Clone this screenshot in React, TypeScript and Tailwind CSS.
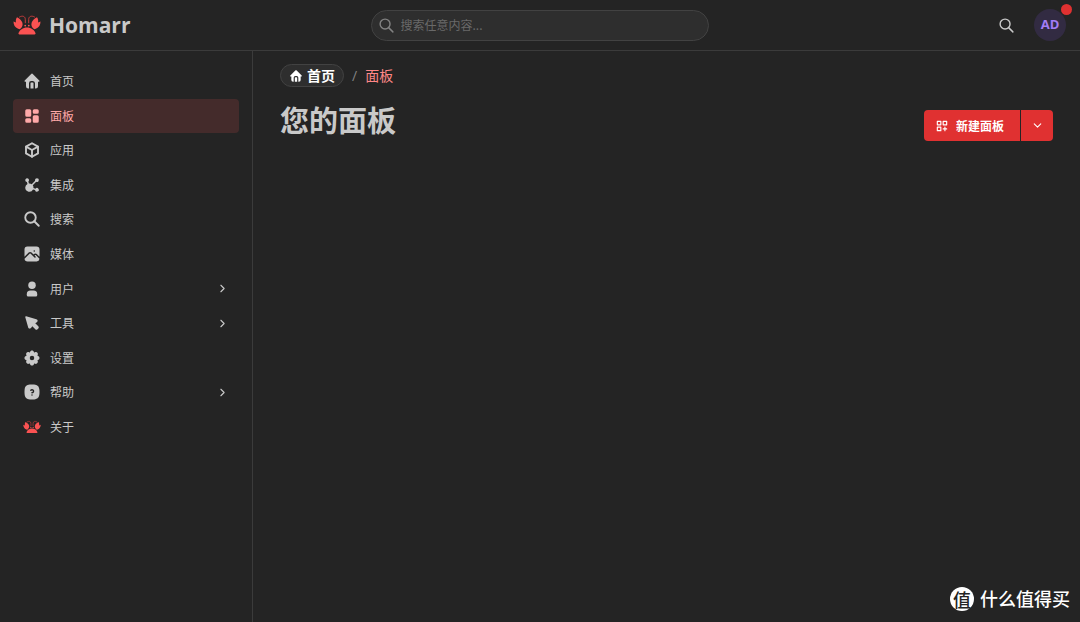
import { useState } from 'react';
import type { IconType } from 'react-icons';
import {
  TbAffiliateFilled,
  TbBox,
  TbCategoryPlus,
  TbChevronDown,
  TbChevronRight,
  TbHelpSquareRoundedFilled,
  TbHomeFilled,
  TbLayoutDashboardFilled,
  TbPhotoFilled,
  TbPointerFilled,
  TbSearch,
  TbSettingsFilled,
  TbUserFilled,
} from 'react-icons/tb';

interface NavItem {
  label: string;
  icon?: IconType;
  outlined?: boolean;
  expandable?: boolean;
}

const NAV_ITEMS: NavItem[] = [
  { label: '首页', icon: TbHomeFilled },
  { label: '面板', icon: TbLayoutDashboardFilled },
  { label: '应用', icon: TbBox, outlined: true },
  { label: '集成', icon: TbAffiliateFilled },
  { label: '搜索', icon: TbSearch, outlined: true },
  { label: '媒体', icon: TbPhotoFilled },
  { label: '用户', icon: TbUserFilled, expandable: true },
  { label: '工具', icon: TbPointerFilled, expandable: true },
  { label: '设置', icon: TbSettingsFilled },
  { label: '帮助', icon: TbHelpSquareRoundedFilled, expandable: true },
  { label: '关于' },
];

function Logo({ className }: { className?: string }) {
  return (
    <svg viewBox="0 0 28 20" className={className} fill="#fa5252" aria-hidden="true">
      {/* 身体 */}
      <path d="M5.500 18.200C6.500 15.200 9.800 12.500 14 12.500s7.500 2.700 8.500 5.700c.2.700-.2 1.200-.9 1.200H6.400c-.7 0-1.100-.5-.9-1.200z" />
      {/* 钳子 */}
      <path d="M4 2.200C2.800 4 2.500 5.700 3 7.500L.5 6.500c-.1 3.300 1.500 6 4.600 7.300l1.700.4c2.700-2 3.300-4.300 2.500-6.800C8.500 5.300 6.500 3.300 4 2.200z" />
      <path d="M24 2.200c1.200 1.800 1.500 3.500 1 5.300l2.500-1c.1 3.300-1.500 6-4.600 7.300l-1.700.4c-2.700-2-3.300-4.300-2.500-6.800.8-2.100 2.800-4.100 5.300-5.200z" />
      {/* 触须 */}
      <path
        d="M6.500 2C9.500.2 12.300 1.300 12.300 4.500v3.300M21.500 2c-3-1.800-5.800-.7-5.800 2.500v3.300"
        fill="none"
        stroke="#c93c3c"
        strokeWidth="1"
        strokeLinecap="round"
      />
      <circle cx="12.200" cy="10.600" r=".9" />
      <circle cx="15.800" cy="10.600" r=".9" />
    </svg>
  );
}

function Header() {
  return (
    <header className="flex h-[51px] shrink-0 items-center justify-between border-b border-[#3b3b3b] pl-[13px] pr-[14px]">
      <a href="#home" className="flex flex-1 items-center gap-2">
        <Logo className="h-5 w-7" />
        <span className="text-[21px] leading-7 font-bold">Homarr</span>
      </a>

      <label className="flex h-[31px] w-[338px] items-center gap-1.5 rounded-full border border-[#424242] bg-[#2e2e2e] pl-1.5 pr-3">
        <TbSearch className="size-[17px] text-[#828282]" />
        <input
          type="text"
          aria-label="搜索"
          placeholder="搜索任意内容..."
          className="min-w-0 flex-1 bg-transparent font-['Noto_Sans_CJK_SC',sans-serif] text-xs outline-none placeholder:text-[#696969]"
        />
      </label>

      <div className="flex flex-1 items-center justify-end gap-[19px]">
        <button type="button" aria-label="搜索">
          <TbSearch className="size-[17px]" />
        </button>
        <button
          type="button"
          className="relative flex size-8 items-center justify-center rounded-full bg-[#322b42] text-[13px] font-bold text-[#a27df5]"
        >
          AD
          <span className="absolute -top-[5px] -right-[6px] size-[11px] rounded-full bg-[#e03131]" />
        </button>
      </div>
    </header>
  );
}

function Sidebar() {
  const [active, setActive] = useState('面板');

  return (
    <nav className="w-[253px] shrink-0 border-r border-[#3b3b3b] p-[13px]">
      <ul className="grid h-[380px] auto-rows-fr font-['Noto_Sans_CJK_SC',sans-serif]">
        {NAV_ITEMS.map(({ label, icon: Icon, outlined, expandable }) => (
          <li key={label} className="flex">
            <button
              type="button"
              onClick={() => setActive(label)}
              className={`flex flex-1 items-center gap-[9px] rounded px-[10px] text-xs ${
                active === label ? 'bg-[#442b2b] text-[#ffa8a8]' : 'hover:bg-[#2e2e2e]'
              }`}
            >
              {Icon ? (
                <Icon className={`size-[18px] ${outlined ? '[stroke-width:2.5]' : ''}`} />
              ) : (
                <Logo className="h-[14px] w-[18px]" />
              )}
              <span>{label}</span>
              {expandable && <TbChevronRight className="ml-auto size-[13px]" />}
            </button>
          </li>
        ))}
      </ul>
    </nav>
  );
}

function Breadcrumbs() {
  return (
    <div className="flex items-center gap-2 text-sm leading-5">
      <a
        href="#home"
        className="flex h-[23px] items-center gap-1 rounded-full border border-[#424242] bg-[#2e2e2e] px-2 font-bold text-white"
      >
        <TbHomeFilled className="size-[14px]" />
        首页
      </a>
      <span className="text-[#828282]">/</span>
      <a href="#boards" className="text-[#ff8787]">
        面板
      </a>
    </div>
  );
}

function CreateBoardButton() {
  return (
    <div className="flex h-[31px] gap-px text-white">
      <button
        type="button"
        className="flex items-center gap-[7px] rounded-l bg-[#e03131] pr-4 pl-[11px] font-['Noto_Sans_CJK_SC',sans-serif] text-xs font-bold"
      >
        <TbCategoryPlus className="size-[14px]" />
        新建面板
      </button>
      <button
        type="button"
        aria-label="更多"
        className="flex w-8 items-center justify-center rounded-r bg-[#e03131]"
      >
        <TbChevronDown className="size-[13px]" />
      </button>
    </div>
  );
}

export default function App() {
  return (
    <div className="relative flex min-h-screen flex-col bg-[#242424] font-['Open_Sans','Noto_Sans_CJK_SC',sans-serif] text-[#c9c9c9]">
      <Header />
      <div className="flex flex-1">
        <Sidebar />
        <main className="min-w-0 flex-1 px-[27px] py-[13px]">
          <Breadcrumbs />
          <div className="mt-[14px] flex items-end justify-between">
            <h1 className="text-[29px] leading-10 font-bold">您的面板</h1>
            <CreateBoardButton />
          </div>
        </main>
      </div>

      {/* 水印 */}
      <div className="absolute right-2.5 bottom-2.5 flex items-center gap-1.5 text-lg leading-[26px] font-medium text-white">
        <span className="flex size-6 items-center justify-center rounded-full bg-white font-['Noto_Sans_CJK_SC',sans-serif] text-lg leading-6 font-medium text-[#242424]">
          值
        </span>
        什么值得买
      </div>
    </div>
  );
}
